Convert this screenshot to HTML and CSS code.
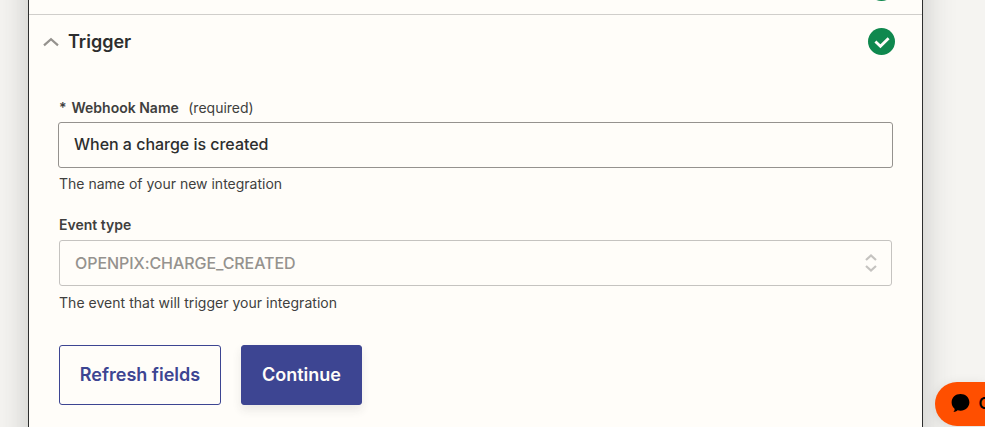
FILE: index.html
```html
<!DOCTYPE html>
<html lang="en">
<head>
<meta charset="utf-8">
<title>Trigger</title>
<link rel="stylesheet" href="styles.css">
</head>
<body>
<main class="panel">
  <section class="previous">
    <span class="status"></span>
  </section>
  <header class="header">
    <svg class="chevron" width="16" height="10" viewBox="0 0 16 10"><path d="M1 8.300 8 2.200l7 6.100" fill="none" stroke="#95928e" stroke-width="2.200"/></svg>
    <h1 class="title">Trigger</h1>
    <span class="status">
      <svg width="27" height="27" viewBox="0 0 27 27"><path d="m7.400 13.600 5 4.700 8.200-8" fill="none" stroke="#fffdf9" stroke-width="2.800"/></svg>
    </span>
  </header>
  <form class="form">
    <div class="field">
      <div class="label"><span class="star">*</span><b>Webhook Name</b><span class="required">(required)</span></div>
      <div class="input">When a charge is created</div>
      <p class="help name-help">The name of your new integration</p>
    </div>
    <div class="field">
      <div class="label"><b>Event type</b></div>
      <div class="select">
        <span>OPENPIX:CHARGE_CREATED</span>
        <svg width="12" height="18" viewBox="0 0 12 18"><path d="m1 6 5-4.500L11 6M1 12l5 4.500L11 12" fill="none" stroke="#c5c3c0" stroke-width="2.200"/></svg>
      </div>
      <p class="help event-help">The event that will trigger your integration</p>
    </div>
    <div class="actions">
      <button type="button" class="button secondary">Refresh fields</button>
      <button type="button" class="button primary">Continue</button>
    </div>
  </form>
</main>
<div class="chat">
  <svg width="19" height="19" viewBox="0 0 19 19"><path d="M9.500 0C14.500 0 18.400 3.500 18.400 8.300s-3.900 8.400-8.900 8.400c-1 0-2-.1-2.900-.4C5.500 17.300 4.100 18 2.400 18c.8-.8 1.200-1.900 1.300-3.100C1.700 13.300.6 11 .6 8.300.6 3.500 4.500 0 9.500 0Z" fill="#000"/></svg>
  <span>Chat</span>
</div>
</body>
</html>
```
FILE: styles.css
```css
* {
  box-sizing: border-box;
}

body {
  display: flow-root;
  margin: 0;
  height: 427px;
  overflow: hidden;
  background: #f5f4f1;
  color: #2d2e2e;
  font-family: Inter, "Liberation Sans", sans-serif;
}

.panel {
  width: 895px;
  height: 507px;
  margin: -40px 0 0 28px;
  background: #fffdf9;
  border: solid #2d2e2e;
  border-width: 0 1px;
  box-shadow: 0 0 30px rgba(45, 46, 46, 0.23);
}

.previous {
  height: 55px;
  padding: 0 27px 13px 0;
  border-bottom: 1px solid #d0cecb;
  display: flex;
  align-items: flex-end;
}

.header {
  height: 53px;
  padding: 0 27px 0 14px;
  display: flex;
  align-items: center;
}

.title {
  margin: 0 0 0 9px;
  font-size: 18px;
  line-height: 24px;
  font-weight: 600;
}

.status {
  width: 27px;
  height: 27px;
  margin-left: auto;
  border-radius: 50%;
  background: #0f884e;
}

.status svg {
  display: block;
}

.form {
  padding: 30px 30px 0;
}

.field {
  height: 117px;
}

.label {
  height: 20px;
  margin-bottom: 5px;
  display: flex;
  color: #403f3e;
  font-size: 14px;
  line-height: 20px;
}

.label b {
  font-weight: 600;
}

.star {
  width: 12.500px;
  font-weight: 600;
}

.required {
  margin-left: 9.500px;
}

.input,
.select {
  height: 46px;
  border-radius: 3px;
  font-size: 16px;
  line-height: 44px;
  font-weight: 500;
}

.input {
  margin: -1px -1px 0;
  padding: 0 15px;
  border: 1px solid #95928e;
  line-height: 42px;
  letter-spacing: -0.02px;
}

.select {
  padding: 0 14px 0 15px;
  border: 1px solid #c5c3c0;
  color: #95928e;
  letter-spacing: -0.07px;
  display: flex;
  align-items: center;
  justify-content: space-between;
}

.help {
  margin: 7px 0 0;
  color: #403f3e;
  font-size: 14px;
  line-height: 20px;
}

.name-help {
  margin-top: 6px;
}

.event-help {
  letter-spacing: 0.03px;
}

.actions {
  padding-top: 13px;
  display: flex;
  gap: 20px;
}

.button {
  height: 60px;
  padding: 0;
  border: 1px solid #3d4592;
  border-radius: 3px;
  font: 600 18px/58px Inter, "Liberation Sans", sans-serif;
}

.secondary {
  width: 162px;
  background: #fffdf9;
  color: #3d4592;
}

.primary {
  width: 121px;
  background: #3d4592;
  color: #fffdf9;
  box-shadow: 0 5px 10px rgba(45, 46, 46, 0.1);
}

.chat {
  position: absolute;
  top: 382px;
  left: 935px;
  width: 50px;
  height: 44px;
  padding: 0 0 2px 15.500px;
  border-radius: 22px 0 0 22px;
  overflow: hidden;
  background: #ff4f00;
  box-shadow: 0 2px 12px rgba(0, 0, 0, 0.1);
  color: #000;
  display: flex;
  align-items: center;
  gap: 9px;
  font-size: 16px;
  font-weight: 600;
}

.chat svg {
  flex: none;
}
```
